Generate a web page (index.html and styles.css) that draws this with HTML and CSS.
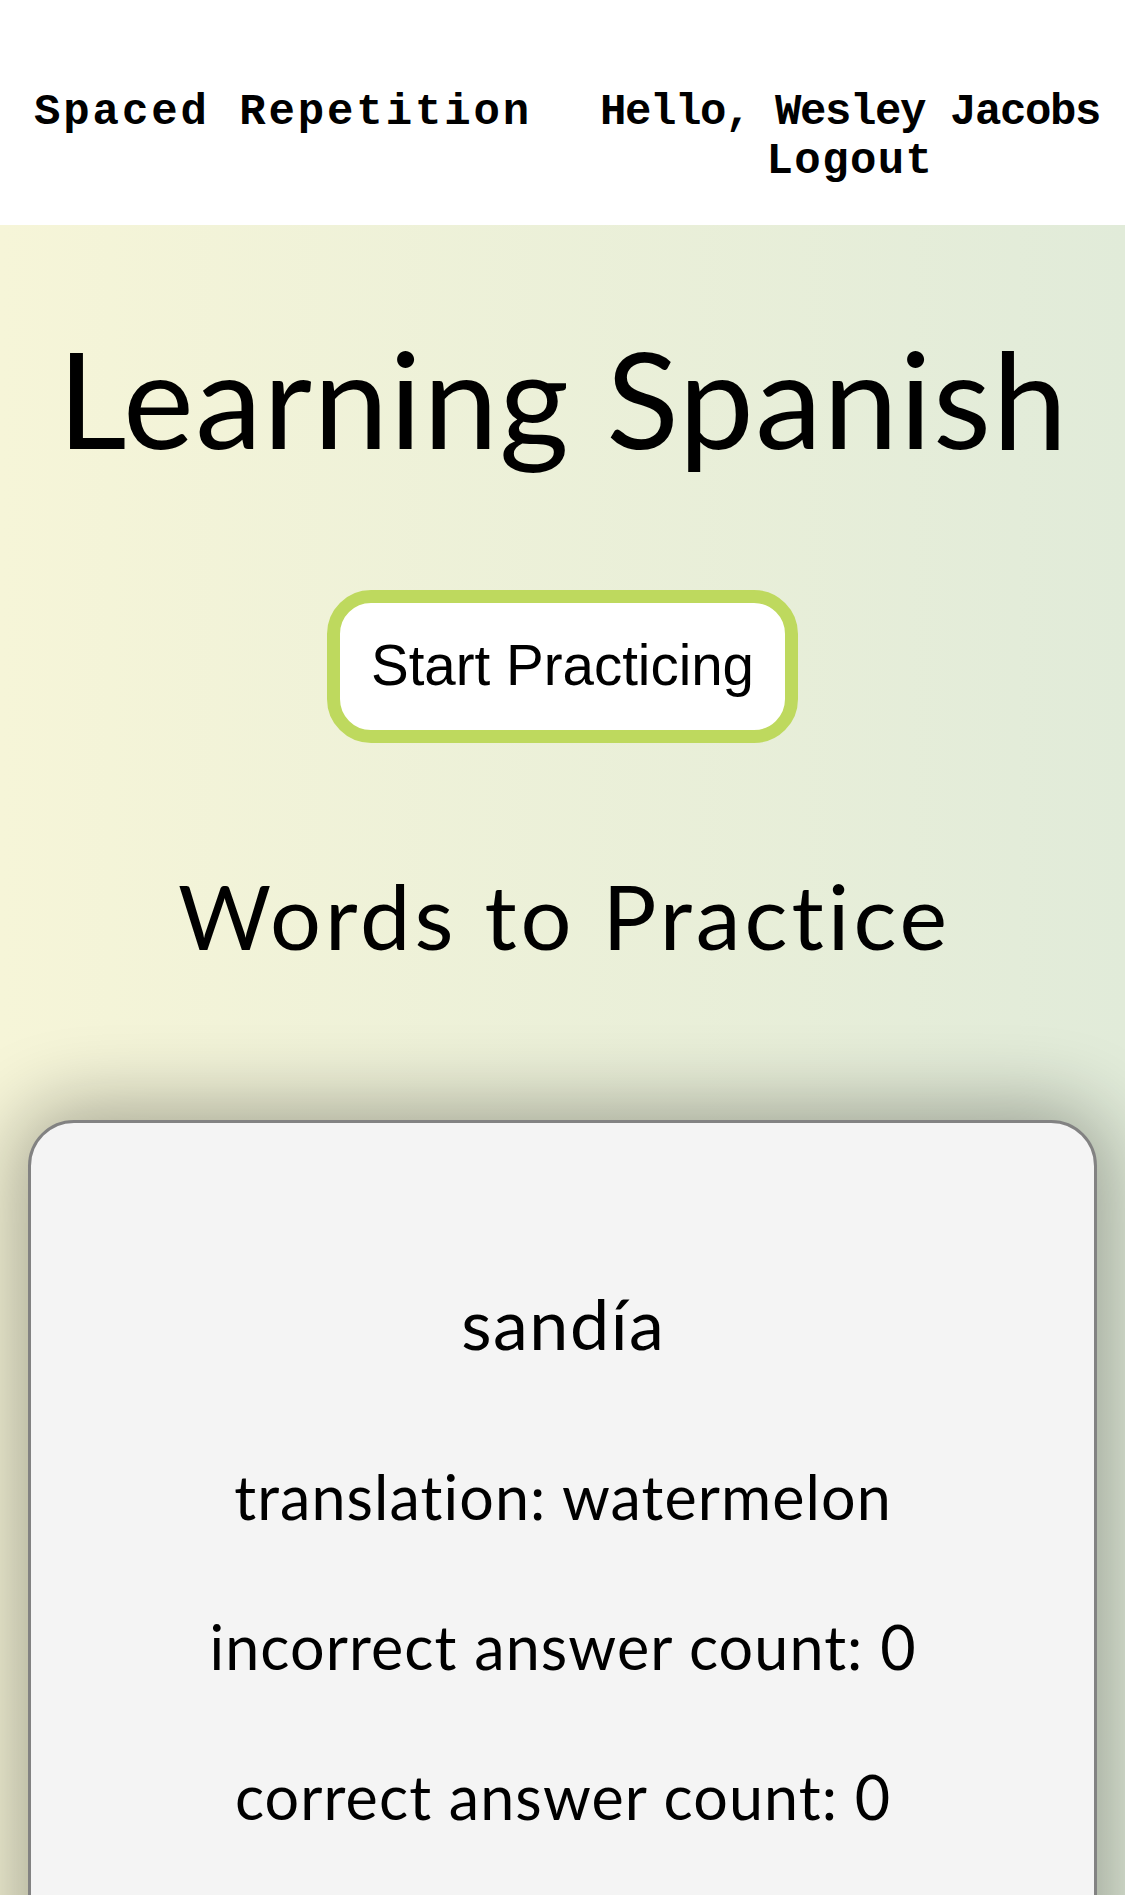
FILE: index.html
```html
<!DOCTYPE html>
<html lang="en">
<head>
<meta charset="utf-8">
<title>Spaced Repetition</title>
<link rel="stylesheet" href="styles.css">
</head>
<body>
<header class="topbar">
  <a class="brand" href="#">Spaced Repetition</a>
  <div class="user">
    <span class="hello">Hello, Wesley Jacobs</span>
    <a class="logout" href="#">Logout</a>
  </div>
</header>
<main class="dashboard">
  <h1 class="lang-title">Learning Spanish</h1>
  <button class="start-btn" type="button">Start Practicing</button>
  <h2 class="section-title">Words to Practice</h2>
  <ul class="word-list">
    <li class="word-card">
      <h3 class="word">sandía</h3>
      <p class="word-line">translation: watermelon</p>
      <p class="word-line">incorrect answer count: 0</p>
      <p class="word-line">correct answer count: 0</p>
    </li>
  </ul>
</main>
</body>
</html>
```
FILE: styles.css
```css
html, body {
  margin: 0;
  padding: 0;
}

body {
  font-family: "Lato", "Liberation Sans", sans-serif;
  color: #000;
  background: linear-gradient(to right, #f6f5d8, #e1ebd9);
  min-height: 1895px;
  overflow: hidden;
}

.topbar {
  box-sizing: border-box;
  height: 225px;
  background: #fff;
  display: flex;
  justify-content: space-between;
  align-items: flex-start;
  padding: 88px 25px 0 34px;
  font-family: "Liberation Mono", "Courier New", monospace;
  font-weight: bold;
  font-size: 44px;
  line-height: 49px;
}

.brand {
  color: #000;
  text-decoration: none;
  letter-spacing: 2.9px;
}

.user {
  display: flex;
  flex-direction: column;
  align-items: center;
}

.hello {
  letter-spacing: -1.4px;
}

.logout {
  color: #000;
  text-decoration: none;
  letter-spacing: 1.4px;
}

.dashboard {
  display: flex;
  flex-direction: column;
  align-items: center;
  text-align: center;
}

.lang-title {
  margin: 93px 0 0;
  font-size: 134px;
  font-weight: normal;
  line-height: 1.2;
  letter-spacing: 1.4px;
  text-indent: 1.4px;
}

.start-btn {
  margin-top: 111px;
  box-sizing: border-box;
  height: 153px;
  padding: 0 31px;
  background: #fff;
  border: 13px solid #bed95e;
  border-radius: 44px;
  font-family: "Liberation Sans", Arial, sans-serif;
  font-size: 56.5px;
  color: #000;
  line-height: 1;
}

.section-title {
  margin: 118px 0 0;
  font-size: 90px;
  font-weight: normal;
  line-height: 1.2;
  letter-spacing: 4px;
  text-indent: 4px;
}

.word-list {
  list-style: none;
  margin: 151px 0 0;
  padding: 0 28px;
  align-self: stretch;
}

.word-card {
  background: #f4f4f4;
  border: 3px solid #828282;
  border-radius: 46px;
  box-shadow: 0 0 80px 12px rgba(0, 0, 0, 0.33);
  padding: 158px 20px 200px;
  display: flex;
  flex-direction: column;
  align-items: center;
}

.word {
  margin: 0;
  font-size: 70px;
  font-weight: normal;
  line-height: 1.2;
  letter-spacing: 1.5px;
  text-indent: 1.5px;
}

.word-line {
  margin: 0;
  font-size: 61px;
  line-height: 1.2;
  letter-spacing: 1.1px;
  text-indent: 1.1px;
}

.word + .word-line {
  margin-top: 95px;
}

.word-line + .word-line {
  margin-top: 77px;
}
```
